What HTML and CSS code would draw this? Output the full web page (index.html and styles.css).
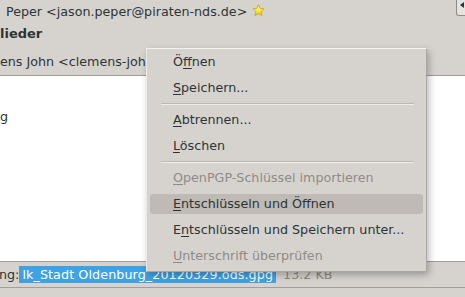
FILE: index.html
```html
<!DOCTYPE html>
<html lang="de">
<head>
    <meta charset="UTF-8">
    <meta name="viewport" content="width=device-width, initial-scale=1.0">
    <title>Nachricht</title>
    <link rel="stylesheet" href="styles.css">
</head>
<body>
    <div class="window">
        <div class="header">
            <div class="from-row">
                <span class="from">Peper &lt;jason.peper@piraten-nds.de&gt;</span>
                <svg class="star" width="13" height="13" viewBox="0 0 13 13">
                    <defs>
                        <linearGradient id="starFill" x1="0" y1="0" x2="0" y2="1">
                            <stop offset="0" stop-color="#fff7a8"/>
                            <stop offset="0.5" stop-color="#fce94f"/>
                            <stop offset="1" stop-color="#e8c400"/>
                        </linearGradient>
                    </defs>
                    <polygon points="6.5,0.8 8.2,4.4 12.1,4.8 9.2,7.5 10,11.6 6.5,9.6 3,11.6 3.8,7.5 0.9,4.8 4.8,4.4"
                             fill="url(#starFill)" stroke="#d3a900" stroke-width="0.9" stroke-linejoin="round"/>
                </svg>
                <span class="spacer"></span>
                <span class="nav-btn"><span class="arrow"></span></span>
            </div>
            <div class="subject">lieder</div>
            <div class="to-row">ens John &lt;clemens-joh</div>
        </div>

        <div class="message-body">
            <p>g</p>
        </div>

        <div class="attach-bar">
            <span class="attach-label">ng:</span>
            <span class="attach-file">lk_Stadt Oldenburg_20120329.ods.gpg</span>
            <span class="attach-size">13.2 KB</span>
        </div>
        <div class="status-bar"></div>

        <ul class="context-menu">
            <li class="item">Ö<u>f</u>fnen</li>
            <li class="item"><u>S</u>peichern...</li>
            <li class="separator"></li>
            <li class="item"><u>A</u>btrennen...</li>
            <li class="item"><u>L</u>öschen</li>
            <li class="separator"></li>
            <li class="item disabled"><u>O</u>penPGP-Schlüssel importieren</li>
            <li class="item active"><u>E</u>ntschlüsseln und Öffnen</li>
            <li class="item">E<u>n</u>tschlüsseln und Speichern unter...</li>
            <li class="item disabled"><u>U</u>nterschrift überprüfen</li>
        </ul>
    </div>
</body>
</html>
```

FILE: styles.css
```css
body {
    margin: 0;
    padding: 0;
    font-family: 'DejaVu Sans', sans-serif;
    font-size: 12.7px;
    color: #2e3436;
    background-color: #d6d3cf;
}

.window {
    position: relative;
    display: flex;
    flex-direction: column;
    width: 465px;
    height: 297px;
    overflow: hidden;
}

.header {
    padding-bottom: 3px;
    border-bottom: 1px solid #9e9a96;
    background-color: #d6d3cf;
}

.from-row {
    display: flex;
    align-items: flex-start;
    width: 465px;
    box-sizing: border-box;
    height: 23px;
    line-height: 23px;
    padding-left: 6px;
    white-space: nowrap;
}

.star {
    flex-shrink: 0;
    margin-left: 5px;
    margin-top: 4px;
}

.spacer {
    flex: 1;
}

/* only the left edge of this button is on screen */
.nav-btn {
    flex: 0 0 9px;
    display: block;
    height: 16px;
    border-left: 1px solid #8e8a85;
    border-bottom: 1px solid #8e8a85;
    border-bottom-left-radius: 3px;
    background-color: #e6e4e1;
    box-sizing: border-box;
}

.nav-btn .arrow {
    display: block;
    width: 0;
    height: 0;
    margin: 2px 0 0 3px;
    border-top: 3px solid transparent;
    border-bottom: 3px solid transparent;
    border-right: 4px solid #2e3436;
}

.subject {
    font-weight: bold;
    font-size: 13px;
    line-height: 21px;
    white-space: nowrap;
}

.to-row {
    padding-top: 7px;
    line-height: 21px;
    white-space: nowrap;
}

.message-body {
    flex: 1;
    background-color: #fff;
}

.message-body p {
    margin: 0;
    padding-top: 32px;
    line-height: 18px;
}

.attach-bar {
    display: flex;
    align-items: center;
    height: 25px;
    border-top: 1px solid #a29e9a;
    border-bottom: 1px solid #a29e9a;
    white-space: nowrap;
}

.attach-label {
    margin-left: -1px;
}

.attach-file {
    padding: 0 3px;
    line-height: 17px;
    letter-spacing: 0.1px;
    background-color: #3fa2e4;
    color: #fff;
}

.attach-size {
    margin-left: 7px;
    color: #8c8884;
}

.status-bar {
    height: 9px;
}

.context-menu {
    position: absolute;
    left: 146px;
    top: 48px;
    width: 281px;
    box-sizing: border-box;
    display: flex;
    flex-direction: column;
    margin: 0;
    padding: 0 0 2px;
    list-style: none;
    background-color: #d6d3cf;
    border: 1px solid;
    border-color: #f4f2f0 #aaa6a2 #aaa6a2 #ecebe9;
    box-shadow: 2px 3px 7px rgba(0, 0, 0, 0.28);
}

.context-menu .item {
    height: 20px;
    line-height: 20px;
    margin: 3px;
    padding-left: 23px;
    border-radius: 3px;
    white-space: nowrap;
}

.context-menu .item u {
    text-underline-offset: 2px;
}

.context-menu .item.active {
    background-color: #bfbab5;
}

.context-menu .item.disabled {
    color: #8f8b87;
}

.context-menu .separator {
    height: 6px;
    margin: 0 12px 0 14px;
    background: linear-gradient(to bottom, transparent 2px, #bcb8b3 2px, #bcb8b3 3px, #eeece9 3px, #eeece9 4px, transparent 4px);
}
```
